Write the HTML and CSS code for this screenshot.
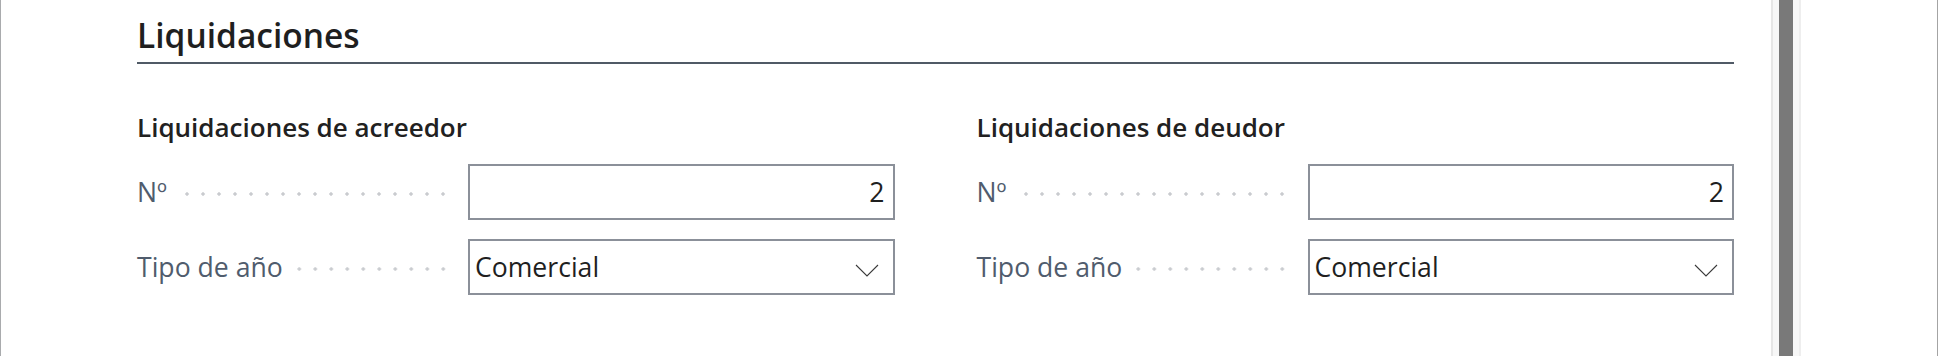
FILE: index.html
```html
<!DOCTYPE html>
<html lang="es">
<head>
<meta charset="utf-8">
<title>Liquidaciones</title>
<link rel="stylesheet" href="styles.css">
</head>
<body>
<div class="page">
  <main class="main">
    <section class="fasttab">
      <h2 class="fasttab-title">Liquidaciones</h2>
      <div class="groups">
        <div class="group">
          <h3 class="group-title">Liquidaciones de acreedor</h3>
          <div class="field">
            <div class="label-wrap"><span class="label">Nº</span><span class="leader"></span></div>
            <div class="control number">2</div>
          </div>
          <div class="field">
            <div class="label-wrap"><span class="label">Tipo de año</span><span class="leader"></span></div>
            <div class="control select"><span class="value">Comercial</span><svg class="chevron" width="24" height="13" viewBox="0 0 24 13"><polyline points="1,1 12,12 23,1" fill="none" stroke="#3a3a3a" stroke-width="1.1"/></svg></div>
          </div>
        </div>
        <div class="group">
          <h3 class="group-title">Liquidaciones de deudor</h3>
          <div class="field">
            <div class="label-wrap"><span class="label">Nº</span><span class="leader"></span></div>
            <div class="control number">2</div>
          </div>
          <div class="field">
            <div class="label-wrap"><span class="label">Tipo de año</span><span class="leader"></span></div>
            <div class="control select"><span class="value">Comercial</span><svg class="chevron" width="24" height="13" viewBox="0 0 24 13"><polyline points="1,1 12,12 23,1" fill="none" stroke="#3a3a3a" stroke-width="1.1"/></svg></div>
          </div>
        </div>
      </div>
    </section>
  </main>
  <div class="scrollbar">
    <div class="sb-edge-l"></div>
    <div class="sb-track"></div>
    <div class="sb-thumb"></div>
    <div class="sb-track"></div>
    <div class="sb-edge-r"></div>
  </div>
  <aside class="aside"></aside>
</div>
</body>
</html>
```
FILE: styles.css
```css
* { box-sizing: border-box; }
html, body { margin: 0; padding: 0; background: #ffffff; }
body { font-family: "Open Sans", "Noto Sans", sans-serif; color: #212121; }

.page { display: flex; height: 356px; overflow: hidden; }

.main {
  flex: 0 0 1771px;
  border-left: 1px solid #a9abad;
  padding: 0 37px 0 136px;
}

.fasttab-title {
  margin: 0;
  padding-top: 15px;
  padding-bottom: 7px;
  font-size: 33.5px;
  line-height: 40px;
  font-weight: 600;
  color: #1f1f1f;
  border-bottom: 2px solid #505a66;
}

.groups {
  display: grid;
  grid-template-columns: 1fr 1fr;
  column-gap: 82px;
  padding-top: 47px;
}

.group-title {
  margin: 0 0 21px 0;
  font-size: 26px;
  line-height: 32px;
  font-weight: 600;
  color: #212121;
}

.field { display: flex; align-items: center; height: 56px; margin-bottom: 19px; }

.label-wrap { flex: 0 0 331px; display: flex; align-items: center; }
.label { font-size: 26.6px; color: #505c6d; white-space: nowrap; }
.leader {
  flex: 1;
  height: 6px;
  margin: 3px 17px 0 12px;
  background-image: radial-gradient(circle, #c9cbcf 1.4px, rgba(255,255,255,0) 2px);
  background-size: 16px 6px;
  background-position: right center;
  background-repeat: repeat-x;
}

.control {
  flex: 1;
  height: 56px;
  border: 2px solid #8b9099;
  display: flex;
  align-items: center;
  font-size: 26.6px;
  color: #1f1f1f;
  background: #fff;
}
.control.number { justify-content: flex-end; padding-right: 8px; }
.control.select { padding-left: 5px; padding-right: 14px; }
.control .value { flex: 1; }
.chevron { display: block; margin-top: 7px; }

.scrollbar { flex: 0 0 30px; display: flex; }
.sb-edge-l { flex: 0 0 2px; background: #e6e6e6; }
.sb-track { flex: 0 0 6px; background: #f7f7f7; }
.sb-thumb { flex: 0 0 14px; background: #797979; }
.sb-edge-r { flex: 0 0 2px; background: #eeeeee; }

.aside { flex: 1; border-right: 1px solid #a4a4a4; background: #fff; }
```
